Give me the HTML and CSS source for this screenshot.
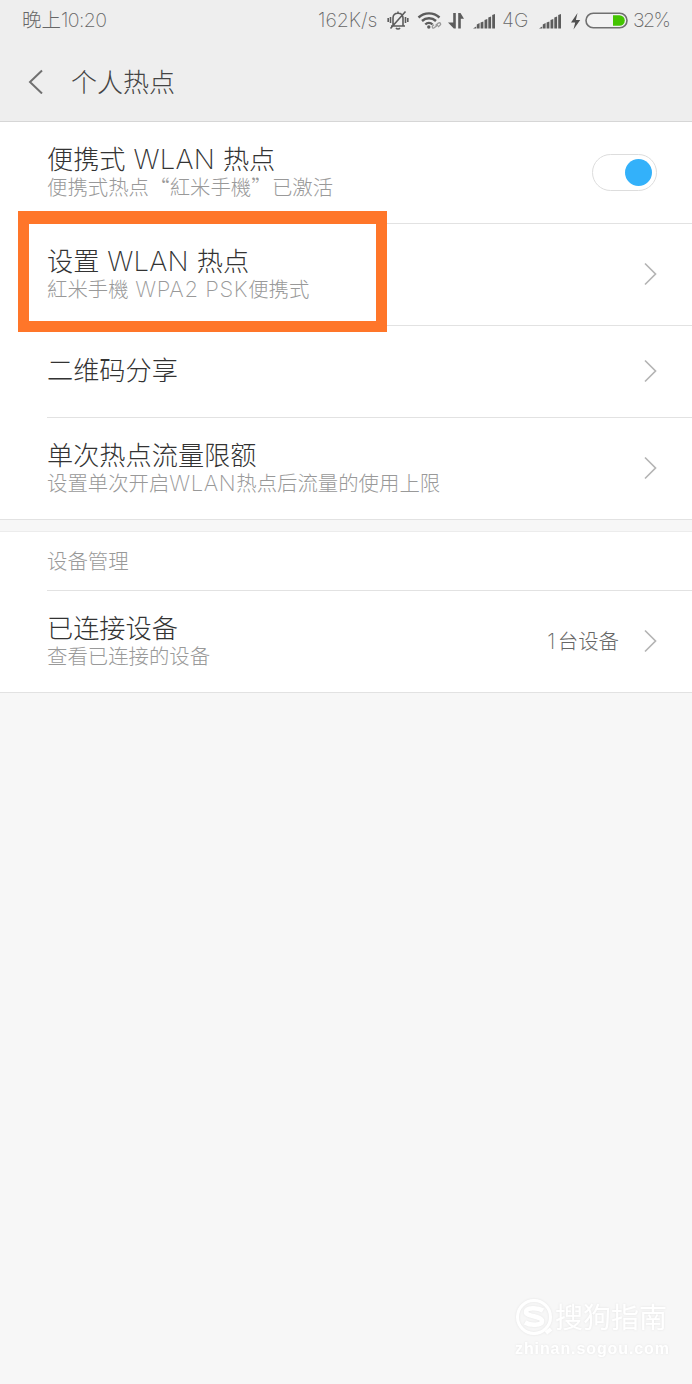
FILE: index.html
```html
<!DOCTYPE html>
<html lang="zh-CN">
<head>
<meta charset="utf-8">
<title>个人热点</title>
<link rel="stylesheet" href="styles.css">
</head>
<body>
<header class="top">
  <div class="status">
    <span class="clock">晚上<span class="num">10:20</span></span>
    <span class="speed num">162K/s</span>
    <svg class="status-icons" width="110" height="24" viewBox="0 0 110 24" fill="none" stroke="#5c5c5c">
      <g stroke-width="1.6">
        <path d="M5 18h14M7 17.500V10c0-3 2-4.800 5-4.800s5 1.800 5 4.800v7.500M10 20c1 1.300 3 1.300 4 0M12 3.500v2M4.500 9v6M2.200 10v4M19.500 9v6M21.800 10v4M4.500 20.500L19.500 3.500"/>
      </g>
      <g stroke-width="2.400">
        <path d="M32.500 9.500c6-5.500 15-5.500 21 0M36 13c4-3.700 10-3.700 14 0M39.300 16.500c2-2 5.200-2 7.200 0"/>
        <circle cx="42.800" cy="19" r="1.700" fill="#5c5c5c" stroke="none"/>
      </g>
      <path d="M49.500 17.500l2.800-2.400c2-1 3.200 1 1.700 2.200l-2 1.600M52 17l-3.500 2.600c-1.500 1.500-3-.5-1.800-1.800l1.300-1" stroke="#999" stroke-width="1.300"/>
      <path d="M67.200 5h2.600v15.500h-2L62 14.500h5.200zM72.200 20.500h2.600v-9.800H78L74.500 5h-2.300z" fill="#5c5c5c" stroke="none"/>
      <path d="M87 20.500h3.200v-2zM90.800 20.500h2.800V15l-2.800 1.500zM94.600 20.500h2.800v-7l-2.800 1zM98.500 20.500h2.800v-9.500l-2.800 1zM102.300 20.500h2.800V8.500l-2.800 1zM106.200 20.500h2.800V6l-2.800 1z" fill="#5c5c5c" stroke="none"/>
    </svg>
    <span class="net num">4G</span>
    <svg class="battery" width="90" height="24" viewBox="0 0 90 24">
      <path d="M1 20.500h3.200v-2zM4.800 20.500h2.800V15l-2.800 1.500zM8.600 20.500h2.800v-7l-2.800 1zM12.500 20.500h2.800v-9.500l-2.800 1zM16.300 20.500h2.800V8.500l-2.800 1zM20.200 20.500H23V6l-2.800 1z" fill="#5c5c5c"/>
      <path d="M39.500 5L33 14.500h4.200L35.500 21.500l6.700-9.500h-4.300z" fill="#505050"/>
      <rect x="48" y="5.200" width="41" height="14.600" rx="7.300" fill="#f2f2f2" stroke="#707070" stroke-width="1.600"/>
      <path d="M75 7.200h6.500a5.300 5.300 0 0 1 0 10.600H75z" fill="#43c400"/>
    </svg>
    <span class="percent num">32%</span>
  </div>
  <div class="titlebar">
    <svg width="16" height="26" viewBox="0 0 16 26"><path d="M14 2.500L2 14l12 11.500" fill="none" stroke="#707070" stroke-width="2"/></svg>
    <h1 class="title">个人热点</h1>
  </div>
</header>

<main>
  <section class="group">
    <div class="row">
      <div class="text">
        <div class="name">便携式<span class="lat"> WLAN </span>热点</div>
        <div class="desc">便携式热点<span class="quote open">“</span>紅米手機<span class="quote close">”</span>已激活</div>
      </div>
      <span class="switch"><span class="knob"></span></span>
    </div>
    <div class="row">
      <div class="text">
        <div class="name">设置<span class="lat"> WLAN </span>热点</div>
        <div class="desc">紅米手機<span class="lat"> WPA2 PSK</span>便携式</div>
      </div>
      <svg class="chevron" width="13" height="24" viewBox="0 0 13 24"><path d="M1 1.500L11.500 12 1 22.500"/></svg>
      <span class="highlight"></span>
    </div>
    <div class="row single">
      <div class="text"><div class="name">二维码分享</div></div>
      <svg class="chevron" width="13" height="24" viewBox="0 0 13 24"><path d="M1 1.500L11.500 12 1 22.500"/></svg>
    </div>
    <div class="row">
      <div class="text">
        <div class="name">单次热点流量限额</div>
        <div class="desc">设置单次开启<span class="lat">WLAN</span>热点后流量的使用上限</div>
      </div>
      <svg class="chevron" width="13" height="24" viewBox="0 0 13 24"><path d="M1 1.500L11.500 12 1 22.500"/></svg>
    </div>
  </section>

  <section class="group devices">
    <h2 class="section-title">设备管理</h2>
    <div class="row">
      <div class="text">
        <div class="name">已连接设备</div>
        <div class="desc">查看已连接的设备</div>
      </div>
      <span class="value"><span class="count">1</span>台设备</span>
      <svg class="chevron" width="13" height="24" viewBox="0 0 13 24"><path d="M1 1.500L11.500 12 1 22.500"/></svg>
    </div>
  </section>
</main>

<footer class="watermark">
  <div class="brand">
    <svg width="38" height="38" viewBox="0 0 38 38" fill="none" stroke="#fff">
      <circle cx="19" cy="19" r="16.500" stroke-width="3"/>
      <path d="M28 12.500c-5-3-17-3.500-17 1.500 0 5 16 3.500 16 9 0 5-12 4.500-17 1.500" stroke-width="4.500"/>
      <path d="M31 35l5-4" stroke-width="4"/>
    </svg>
    <span class="brand-name">搜狗指南</span>
  </div>
  <div class="brand-url">zhinan.sogou.com</div>
</footer>
</body>
</html>
```
FILE: styles.css
```css
* { box-sizing: border-box; }
body {
  margin: 0;
  height: 1384px;
  display: flex;
  flex-direction: column;
  background: #f7f7f7;
  font-family: "Noto Sans CJK SC", sans-serif;
  font-weight: 300;
  color: #333;
  white-space: nowrap;
  overflow: hidden;
}
h1, h2 { margin: 0; font-weight: 300; }
.top {
  height: 122px;
  background: #eee;
  border-bottom: 1px solid #d6d6d6;
}
.status {
  height: 40px;
  padding: 0 20px 0 22px;
  display: flex;
  align-items: center;
  font-size: 19.5px;
  color: #666;
}
.num, .lat, .count { font-family: Inter, "Liberation Sans", sans-serif; font-weight: 250; }
.lat { white-space: pre; line-height: 0; }
.clock { width: 296px; line-height: 36px; padding-bottom: 2px; }
.clock .num { letter-spacing: -.6px; line-height: 0; }
.speed { width: 68px; }
.status-icons { margin-right: 6px; }
.net { width: 36px; }
.battery { margin-right: 5px; }
.percent { width: 39px; letter-spacing: -1.500px; }
.titlebar {
  height: 81px;
  padding-left: 28px;
  display: flex;
  align-items: center;
  gap: 27px;
}
.title { font-size: 26px; line-height: 40px; color: #444; }
.group { background: #fff; border-bottom: 1px solid #e2e2e2; }
.devices { margin-top: 11px; border-top: 1px solid #ececec; }
.row {
  position: relative;
  height: 101px;
  margin-left: 47px;
  padding-right: 35px;
  display: flex;
  align-items: center;
}
.row + .row { height: 102px; border-top: 1px solid #e2e2e2; }
.row + .single { height: 92px; }
.text { flex: 1; padding-bottom: 3px; }
.single .text { padding-bottom: 5px; }
.name { font-size: 26.200px; line-height: 30px; }
.name .lat { font-size: 27.500px; letter-spacing: .2px; }
.desc { font-size: 20.400px; line-height: 27px; color: #999; }
.desc .lat { font-size: 22px; letter-spacing: .6px; }
.quote { display: inline-block; width: 20.700px; line-height: 0; }
.open { text-align: right; }
.chevron { fill: none; stroke: #b5b5b5; stroke-width: 1.700; margin-bottom: 1px; }
.switch {
  width: 65px;
  height: 37px;
  margin-bottom: 1px;
  padding: 0 4px;
  border: 1px solid #ddd;
  border-radius: 19px;
  display: flex;
  align-items: center;
  justify-content: flex-end;
}
.knob { width: 27px; height: 27px; border-radius: 50%; background: #33b1fa; }
.highlight {
  position: absolute;
  z-index: 1;
  left: -29px;
  top: -13px;
  width: 369px;
  height: 121px;
  border: 11px solid #ff7629;
  border-top-width: 13px;
}
.section-title {
  height: 59px;
  margin-left: 47px;
  border-bottom: 1px solid #e2e2e2;
  font-size: 20.400px;
  line-height: 56px;
  color: #999;
}
.value { margin-right: 25px; padding-bottom: 4px; font-size: 20.400px; color: #666; }
.count { font-size: 21px; letter-spacing: 2.500px; line-height: 0; }
.watermark {
  margin-top: auto;
  align-self: flex-end;
  width: 177px;
  padding-bottom: 23px;
  color: #fff;
  filter: drop-shadow(0 0 1px rgba(0, 0, 0, .08));
}
.brand { display: flex; align-items: center; gap: 2px; }
.brand-name { font-size: 28px; line-height: 38px; font-weight: 400; padding-bottom: 2px; }
.brand-url {
  font: 700 16px/24px "Liberation Sans", Arial, sans-serif;
  letter-spacing: .900px;
}
```
